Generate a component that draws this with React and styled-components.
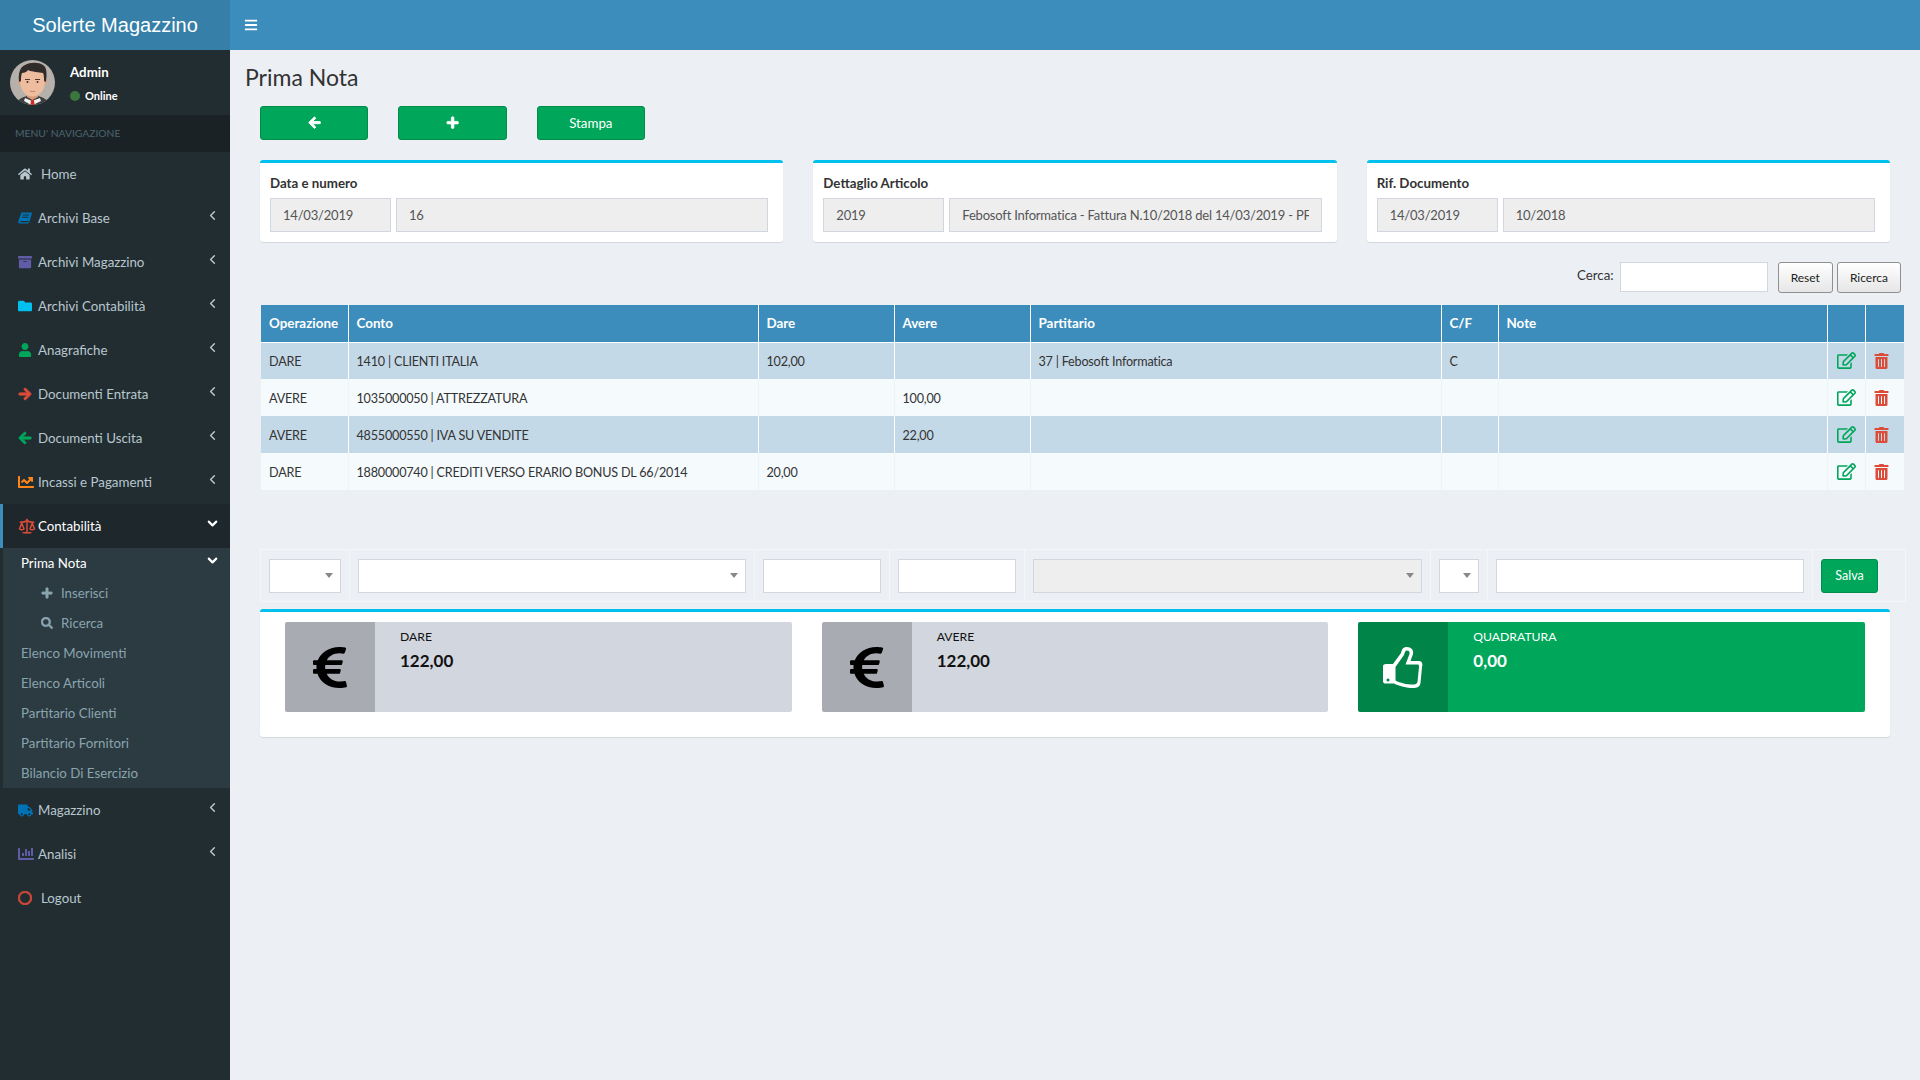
import React from 'react';
import styled, { createGlobalStyle } from 'styled-components';
import { ChevronDown, ChevronLeft, Scale } from 'lucide-react';
import {
  FaArchive,
  FaArrowLeft,
  FaArrowRight,
  FaBars,
  FaChartBar,
  FaChartLine,
  FaEuroSign,
  FaFolder,
  FaHome,
  FaPlus,
  FaRegCircle,
  FaRegEdit,
  FaSearch,
  FaTrashAlt,
  FaTruck,
  FaUser,
} from 'react-icons/fa';

const GlobalStyle = createGlobalStyle`
  html, body {
    margin: 0;
    padding: 0;
    background: #ecf0f5;
  }
  * {
    box-sizing: border-box;
  }
  body {
    font-family: Lato, "Noto Sans", sans-serif;
    font-size: 13.3px;
    color: #333;
  }
`;

const BoldArrowRight = styled(FaArrowRight)`
  stroke: currentColor;
  stroke-width: 36px;
`;

const BoldArrowLeft = styled(FaArrowLeft)`
  stroke: currentColor;
  stroke-width: 36px;
`;

const BoldCircle = styled(FaRegCircle)`
  stroke: currentColor;
  stroke-width: 30px;
`;

const BoldPlus = styled(FaPlus)`
  stroke: currentColor;
  stroke-width: 30px;
`;

const BoldSearch = styled(FaSearch)`
  stroke: currentColor;
  stroke-width: 20px;
`;

const BookIcon = () => (
  <svg width="1em" height="1em" viewBox="0 0 14 14" fill="currentColor">
    <path
      fillRule="evenodd"
      d="M3.500 1.500H13c.8 0 1 .5.800 1.200l-2.500 8.600c-.2.700-.7 1.200-1.500 1.200H2c-1.200 0-2-1-1.700-2.300zM5 3.500l-.3 1h6.300l.3-1zM4.300 5.700l-.3 1h6.300l.3-1zM2.300 10.100c-.2.700.1 1.200.7 1.200h7.300c.3 0 .5-.1.600-.4l.1-.8z"
    />
  </svg>
);

const ThumbIcon = () => (
  <svg width="40" height="43" viewBox="0 0 40 43" fill="#fff">
    <path
      fillRule="evenodd"
      d="M3 18H10L18 7C19 3 20 1 24 1C28 1 31 4 30 8L27.500 15H36C39 15 40 18 39 21L37.500 37C37 41 34 42 30 42C24 42 16 40 11 37.500H3C1 37.500 0 37 0 35V20C0 19 1 18 3 18ZM12.500 21L21 9C22 6 22 4.500 24 4.500C26 4.500 27 6 26.500 8L22.500 18.500H35C36 18.500 36 20 36 21L34.500 36C34 38 32 38.500 30 38.500C24 38.500 17 37 12.500 34.500ZM5 32.500a1.500 1.500 0 1 0 .01 0Z"
    />
  </svg>
);

const MENU_TOP = [
  { label: 'Home', icon: FaHome, color: '#b8c7ce', indent: 3 },
  { label: 'Archivi Base', icon: BookIcon, color: '#0073b7', arrow: true },
  { label: 'Archivi Magazzino', icon: FaArchive, color: '#605ca8', arrow: true },
  { label: 'Archivi Contabilità', icon: FaFolder, color: '#00c0ef', arrow: true },
  { label: 'Anagrafiche', icon: FaUser, color: '#00a65a', arrow: true },
  { label: 'Documenti Entrata', icon: BoldArrowRight, color: '#dd4b39', arrow: true },
  { label: 'Documenti Uscita', icon: BoldArrowLeft, color: '#00a65a', arrow: true },
  { label: 'Incassi e Pagamenti', icon: FaChartLine, color: '#ff851b', size: 16, arrow: true },
];

const SUB_LINKS = [
  'Elenco Movimenti',
  'Elenco Articoli',
  'Partitario Clienti',
  'Partitario Fornitori',
  'Bilancio Di Esercizio',
];

const COLUMNS = [87, 410, 136, 136, 411, 57, 329, 38, 39];

const ROWS = [
  { op: 'DARE', conto: '1410 | CLIENTI ITALIA', dare: '102,00', avere: '', part: '37 | Febosoft Informatica', cf: 'C' },
  { op: 'AVERE', conto: '1035000050 | ATTREZZATURA', dare: '', avere: '100,00', part: '', cf: '' },
  { op: 'AVERE', conto: '4855000550 | IVA SU VENDITE', dare: '', avere: '22,00', part: '', cf: '' },
  { op: 'DARE', conto: '1880000740 | CREDITI VERSO ERARIO BONUS DL 66/2014', dare: '20,00', avere: '', part: '', cf: '' },
];

const Avatar = () => (
  <AvatarSvg viewBox="0 0 45 45">
    <defs>
      <clipPath id="avatar-clip">
        <circle cx="22.5" cy="22.5" r="22.5" />
      </clipPath>
    </defs>
    <g clipPath="url(#avatar-clip)">
      <rect width="45" height="45" fill="#b5b0a9" />
      <path d="M6 45c1-6 7-8 11-9h11c4 1 10 3 11 9z" fill="#3b3d40" />
      <path d="M15 38l7 3 8-3 1 3-8 4h-2l-7-4z" fill="#f4f1ee" />
      <path d="M21.2 39.5h2.6l.8 5.5h-4.2z" fill="#cf2a2e" />
      <path d="M17 30h11v7l-5.500 3-5.500-3z" fill="#d99c7c" />
      <ellipse cx="9.800" cy="21" rx="1.800" ry="3.500" fill="#dfa586" />
      <ellipse cx="35.200" cy="21" rx="1.800" ry="3.500" fill="#dfa586" />
      <path d="M10.500 14c0-5 24-5 24 0v10c0 7-6 12.500-12 12.500s-12-5.500-12-12.500z" fill="#eebd9f" />
      <path d="M9 22c-1-9 1-15 6-17 5-3 14-3 18 0 4 2 4 9 3 17l-2-1c0-3 0-6-1-8-4-1-11-1-15-3-1 2-4 3-6 3-1 2-1 5-1 8z" fill="#302c2b" />
      <path d="M15 19.500h5M25 19.500h5" stroke="#4a3a32" strokeWidth="1" />
      <circle cx="17.500" cy="22" r="1" fill="#3a3230" />
      <circle cx="27.500" cy="22" r="1" fill="#3a3230" />
      <path d="M20 31c1.500.8 3.500.8 5 0" stroke="#bc7a62" strokeWidth="1" fill="none" />
    </g>
  </AvatarSvg>
);

const NavItem = ({ label, icon: Icon, color, size, indent, arrow, active, open }) => (
  <NavRow $active={active}>
    <NavIcon $color={color} $size={size}><Icon /></NavIcon>
    <NavLabel $indent={indent}>{label}</NavLabel>
    {arrow && (
      <NavArrow>
        {open ? <ChevronDown size={15} strokeWidth={3.4} /> : <ChevronLeft size={15} strokeWidth={2.4} />}
      </NavArrow>
    )}
  </NavRow>
);

const Sidebar = () => (
  <Side>
    <Brand>Solerte Magazzino</Brand>
    <UserPanel>
      <Avatar />
      <UserInfo>
        <UserName>Admin</UserName>
        <UserStatus><StatusDot />Online</UserStatus>
      </UserInfo>
    </UserPanel>
    <MenuHeader>MENU' NAVIGAZIONE</MenuHeader>
    {MENU_TOP.map((item) => <NavItem key={item.label} {...item} />)}
    <NavItem label="Contabilità" icon={Scale} color="#dd4b39" size={18} arrow active open />
    <SubMenu>
      <SubRow $active>
        Prima Nota
        <NavArrow><ChevronDown size={15} strokeWidth={3.4} /></NavArrow>
      </SubRow>
      <SubSubRow><SubSubIcon><BoldPlus /></SubSubIcon>Inserisci</SubSubRow>
      <SubSubRow><SubSubIcon><BoldSearch /></SubSubIcon>Ricerca</SubSubRow>
      {SUB_LINKS.map((link) => <SubRow key={link}>{link}</SubRow>)}
    </SubMenu>
    <NavItem label="Magazzino" icon={FaTruck} color="#0073b7" size={15} arrow />
    <NavItem label="Analisi" icon={FaChartBar} color="#605ca8" size={16} arrow />
    <NavItem label="Logout" icon={BoldCircle} color="#dd4b39" indent={3} />
  </Side>
);

const InfoCard = ({ title, first, second }) => (
  <Card>
    <CardTitle>{title}</CardTitle>
    <CardFields>
      <ReadField readOnly value={first} />
      <ReadField readOnly value={second} />
    </CardFields>
  </Card>
);

const InfoBox = ({ icon, label, value, $green }) => (
  <Box $green={$green}>
    <BoxIcon $green={$green}>{icon}</BoxIcon>
    <BoxBody>
      <BoxLabel>{label}</BoxLabel>
      <BoxValue>{value}</BoxValue>
    </BoxBody>
  </Box>
);

const Movements = () => (
  <DataTable>
    <colgroup>
      {COLUMNS.map((w, i) => <col key={i} width={w} />)}
    </colgroup>
    <thead>
      <tr>
        <Th>Operazione</Th>
        <Th>Conto</Th>
        <Th>Dare</Th>
        <Th>Avere</Th>
        <Th>Partitario</Th>
        <Th>C/F</Th>
        <Th>Note</Th>
        <Th />
        <Th />
      </tr>
    </thead>
    <tbody>
      {ROWS.map((row) => (
        <Tr key={row.conto}>
          <Td>{row.op}</Td>
          <Td>{row.conto}</Td>
          <Td>{row.dare}</Td>
          <Td>{row.avere}</Td>
          <Td>{row.part}</Td>
          <Td>{row.cf}</Td>
          <Td />
          <IconCell $color="#00a65a"><FaRegEdit /></IconCell>
          <IconCell $color="#dd4b39" $pr={6}><TrashIcon /></IconCell>
        </Tr>
      ))}
    </tbody>
  </DataTable>
);

const EntryRow = () => (
  <EntryTable>
    <colgroup>
      {[89, 405, 135, 135, 406, 57, 325, 93].map((w, i) => <col key={i} width={w} />)}
    </colgroup>
    <tbody>
      <tr>
        <EntryCell><SelectBox /></EntryCell>
        <EntryCell><SelectBox /></EntryCell>
        <EntryCell><EntryInput /></EntryCell>
        <EntryCell><EntryInput /></EntryCell>
        <EntryCell><SelectBox $disabled /></EntryCell>
        <EntryCell><SelectBox /></EntryCell>
        <EntryCell><EntryInput /></EntryCell>
        <EntryCell><SaveButton>Salva</SaveButton></EntryCell>
      </tr>
    </tbody>
  </EntryTable>
);

export default function App() {
  return (
    <Page>
      <GlobalStyle />
      <Sidebar />
      <Main>
        <TopBar><Burger><FaBars /></Burger></TopBar>
        <Content>
          <PageTitle>Prima Nota</PageTitle>
          <Section>
            <ActionRow>
              <ActionButton><BoldArrowLeft /></ActionButton>
              <ActionButton><BoldPlus /></ActionButton>
              <ActionButton>Stampa</ActionButton>
            </ActionRow>
            <CardRow>
              <InfoCard title="Data e numero" first="14/03/2019" second="16" />
              <InfoCard
                title="Dettaglio Articolo"
                first="2019"
                second="Febosoft Informatica - Fattura N.10/2018 del 14/03/2019 - PF 2019 Prima Nota"
              />
              <InfoCard title="Rif. Documento" first="14/03/2019" second="10/2018" />
            </CardRow>
          </Section>
          <SearchBar>
            <SearchLabel>Cerca:</SearchLabel>
            <SearchInput />
            <DefaultButton $ml={10}>Reset</DefaultButton>
            <DefaultButton $ml={4}>Ricerca</DefaultButton>
          </SearchBar>
          <TableWrap><Movements /></TableWrap>
          <EntryWrap><EntryRow /></EntryWrap>
          <Section>
            <TotalsCard>
              <InfoBox icon={<EuroIcon preserveAspectRatio="none" />} label="DARE" value="122,00" />
              <InfoBox icon={<EuroIcon preserveAspectRatio="none" />} label="AVERE" value="122,00" />
              <InfoBox icon={<ThumbIcon />} label="QUADRATURA" value="0,00" $green />
            </TotalsCard>
          </Section>
        </Content>
      </Main>
    </Page>
  );
}

const Page = styled.div`
  display: flex;
  min-height: 1080px;
`;

const Side = styled.aside`
  width: 230px;
  flex-shrink: 0;
  background: #222d32;
`;

const Brand = styled.div`
  height: 50px;
  background: #367fa9;
  color: #fff;
  font-family: "Liberation Sans", Arial, sans-serif;
  font-size: 20px;
  line-height: 50px;
  text-align: center;
`;

const UserPanel = styled.div`
  height: 65px;
  padding: 10px;
  display: flex;
`;

const AvatarSvg = styled.svg`
  width: 45px;
  height: 45px;
  flex-shrink: 0;
`;

const UserInfo = styled.div`
  margin-left: 15px;
  padding-top: 2px;
  color: #fff;
`;

const UserName = styled.div`
  font-weight: 700;
  font-size: 13.3px;
  line-height: 20px;
`;

const UserStatus = styled.div`
  display: flex;
  align-items: center;
  margin-top: 4px;
  font-size: 11px;
  font-weight: 700;
  line-height: 20px;
`;

const StatusDot = styled.span`
  width: 10px;
  height: 10px;
  border-radius: 50%;
  background: #3c763d;
  margin-right: 5px;
`;

const MenuHeader = styled.div`
  height: 37px;
  padding-left: 15px;
  background: #1a2226;
  color: #4b646f;
  font-size: 10.3px;
  line-height: 37px;
`;

const NavRow = styled.div`
  height: 44px;
  display: flex;
  align-items: center;
  padding-left: ${(p) => (p.$active ? 15 : 18)}px;
  color: ${(p) => (p.$active ? '#fff' : '#b8c7ce')};
  background: ${(p) => (p.$active ? '#1e282c' : 'transparent')};
  border-left: ${(p) => (p.$active ? '3px solid #3c8dbc' : '0')};
`;

const NavIcon = styled.span`
  width: 20px;
  flex-shrink: 0;
  display: flex;
  color: ${(p) => p.$color};
  font-size: ${(p) => p.$size || 14}px;
  svg {
    flex-shrink: 0;
    width: ${(p) => p.$size || 14}px;
    height: ${(p) => p.$size || 14}px;
  }
`;

const NavLabel = styled.span`
  margin-left: ${(p) => p.$indent || 0}px;
  flex: 1;
`;

const NavArrow = styled.span`
  display: flex;
  margin-left: auto;
  margin-right: 10px;
  margin-top: -5px;
`;

const SubMenu = styled.div`
  margin-left: 3px;
  background: #2c3b41;
`;

const SubRow = styled.div`
  height: 30px;
  display: flex;
  align-items: center;
  padding-left: 18px;
  color: ${(p) => (p.$active ? '#fff' : '#8aa4af')};
`;

const SubSubRow = styled.div`
  height: 30px;
  display: flex;
  align-items: center;
  padding-left: 38px;
  color: #8aa4af;
`;

const SubSubIcon = styled.span`
  width: 20px;
  display: flex;
  font-size: 12px;
`;

const Main = styled.main`
  flex: 1;
  min-width: 0;
`;

const TopBar = styled.header`
  height: 50px;
  background: #3c8dbc;
  display: flex;
  align-items: center;
  padding-left: 14px;
`;

const Burger = styled.span`
  display: flex;
  color: #fff;
  font-size: 14px;
`;

const Content = styled.div`
  padding: 0 15px;
`;

const PageTitle = styled.h1`
  margin: 0;
  padding: 11px 0 12px;
  font-size: 23px;
  font-weight: 400;
  line-height: 33px;
`;

const Section = styled.section`
  padding: 0 15px;
`;

const ActionRow = styled.div`
  display: grid;
  grid-template-columns: repeat(3, 108.33px);
  gap: 30px;
`;

const ActionButton = styled.button`
  height: 34px;
  display: flex;
  align-items: center;
  justify-content: center;
  background: #00a65a;
  border: 1px solid #008d4c;
  border-radius: 3px;
  color: #fff;
  font: inherit;
`;

const CardRow = styled.div`
  margin-top: 20px;
  display: grid;
  grid-template-columns: repeat(3, 1fr);
  gap: 30px;
`;

const Card = styled.div`
  height: 82px;
  padding: 10px 15px 10px 10px;
  background: #fff;
  border-top: 3px solid #00c0ef;
  border-radius: 3px;
  box-shadow: 0 1px 1px rgba(0, 0, 0, 0.1);
`;

const CardTitle = styled.div`
  font-weight: 700;
  line-height: 20px;
`;

const CardFields = styled.div`
  margin-top: 5px;
  display: flex;
  gap: 5px;
`;

const ReadField = styled.input`
  flex: 1;
  height: 34px;
  min-width: 0;
  padding: 0 12px;
  background: #eee;
  border: 1px solid #d2d6de;
  color: #555;
  font: inherit;
  font-size: 13px;
  letter-spacing: -0.2px;
  &:first-child {
    flex: none;
    width: 121px;
  }
`;

const SearchBar = styled.div`
  margin-top: 20px;
  padding-right: 4px;
  display: flex;
  justify-content: flex-end;
  align-items: flex-start;
`;

const SearchLabel = styled.label`
  margin-top: 3px;
  margin-right: 6px;
  line-height: 20px;
`;

const SearchInput = styled.input`
  width: 148px;
  height: 30px;
  background: #fff;
  border: 1px solid #d2d6de;
`;

const DefaultButton = styled.button`
  height: 31px;
  margin-left: ${(p) => p.$ml}px;
  padding: 0 12px;
  background: linear-gradient(#fff, #e6e6e6);
  border: 1px solid #8f8f8f;
  border-radius: 3px;
  color: #222;
  font: inherit;
  font-size: 12px;
`;

const TableWrap = styled.div`
  margin-top: 12px;
  padding: 0 1px 0 16px;
`;

const DataTable = styled.table`
  width: 100%;
  table-layout: fixed;
  border-collapse: collapse;
  font-size: 12.6px;
  letter-spacing: -0.2px;
`;

const Th = styled.th`
  height: 37px;
  padding: 0 8px;
  background: #3c8dbc;
  color: #fff;
  text-align: left;
  font-weight: 700;
  font-size: 13.4px;
  letter-spacing: 0;
  border-left: 1px solid #fff;
  border-bottom: 1px solid #fff;
  &:first-child {
    border-left: 0;
  }
`;

const Tr = styled.tr`
  background: #f5fafd;
  &:nth-child(odd) {
    background: #c4d9e7;
  }
  &:nth-child(odd) td {
    border-left-color: #fff;
  }
`;

const Td = styled.td`
  height: 37px;
  padding: 2px 8px 0;
  border-left: 1px solid #eef3f6;
  color: #333;
  white-space: nowrap;
  &:first-child {
    border-left: 0;
  }
`;

const IconCell = styled(Td)`
  padding: 0 ${(p) => p.$pr || 0}px 0 0;
  font-size: 19px;
  color: ${(p) => p.$color};
  svg {
    display: block;
    margin: 0 auto;
  }
`;

const TrashIcon = styled(FaTrashAlt)`
  width: 15px;
  height: 16px;
`;

const EntryWrap = styled.div`
  margin-top: 59px;
  padding-left: 15px;
`;

const EntryTable = styled.table`
  width: 100%;
  table-layout: fixed;
  border-collapse: collapse;
`;

const EntryCell = styled.td`
  height: 52px;
  padding: 0 8px;
  border: 1px solid #f4f6f8;
`;

const EntryInput = styled.input`
  display: block;
  width: 100%;
  height: 34px;
  background: #fff;
  border: 1px solid #d2d6de;
`;

const SelectBox = styled.div`
  height: 34px;
  display: flex;
  align-items: center;
  justify-content: flex-end;
  padding-right: 7px;
  background: ${(p) => (p.$disabled ? '#eee' : '#fff')};
  border: 1px solid #d2d6de;
  &::after {
    content: '';
    border-style: solid;
    border-width: 5px 4px 0;
    border-color: #888 transparent transparent;
  }
`;

const SaveButton = styled(ActionButton)`
  width: 57px;
  font-size: 12.5px;
`;

const TotalsCard = styled.div`
  margin-top: 7px;
  height: 128px;
  padding: 10px 25px 0;
  display: grid;
  grid-template-columns: repeat(3, 1fr);
  gap: 30px;
  background: #fff;
  border-top: 3px solid #00c0ef;
  border-radius: 3px;
  box-shadow: 0 1px 1px rgba(0, 0, 0, 0.1);
`;

const Box = styled.div`
  height: 90px;
  display: flex;
  background: ${(p) => (p.$green ? '#00a65a' : '#d2d6de')};
  color: ${(p) => (p.$green ? '#fff' : '#111')};
  border-radius: 2px;
`;

const BoxIcon = styled.div`
  width: 90px;
  display: flex;
  align-items: center;
  justify-content: center;
  background: rgba(0, 0, 0, 0.2);
  color: ${(p) => (p.$green ? '#fff' : '#000')};
  border-radius: 2px 0 0 2px;
`;

const EuroIcon = styled(FaEuroSign)`
  width: 34px;
  height: 47px;
`;

const BoxBody = styled.div`
  padding: 5px 25px;
`;

const BoxLabel = styled.div`
  font-size: 12.2px;
  line-height: 20px;
`;

const BoxValue = styled.div`
  margin-top: 1px;
  font-size: 17px;
  font-weight: 700;
  line-height: 26px;
`;
